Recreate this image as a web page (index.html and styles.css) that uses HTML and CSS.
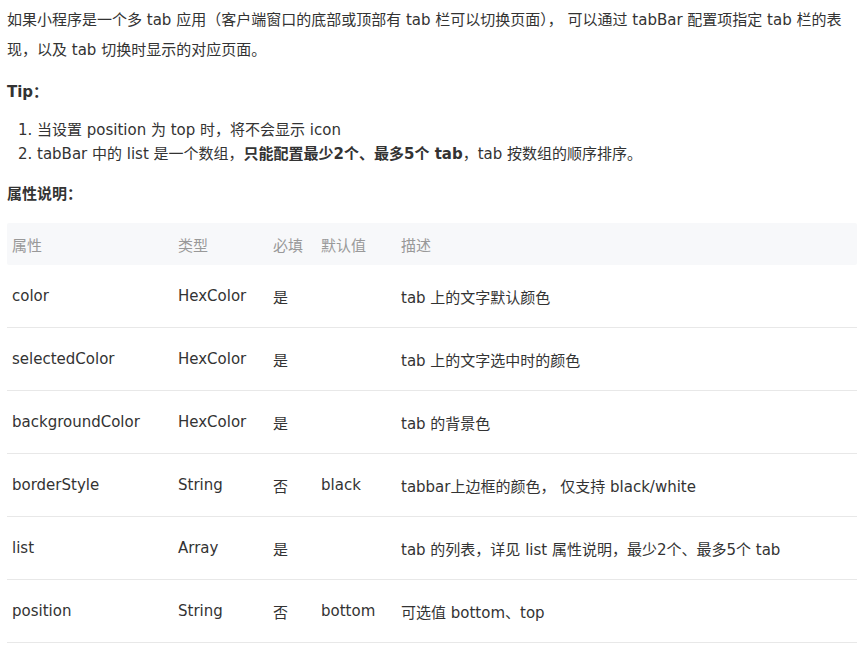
FILE: index.html
```html
<!DOCTYPE html>
<html lang="zh-CN">
<head>
<meta charset="utf-8">
<link rel="stylesheet" href="styles.css">
</head>
<body>
<div class="doc">
  <p class="intro">如果小程序是一个多 tab 应用（客户端窗口的底部或顶部有 tab 栏可以切换页面）， 可以通过 tabBar 配置项指定 tab 栏的表现，以及 tab 切换时显示的对应页面。</p>
  <p class="label">Tip：</p>
  <ol class="tips">
    <li>当设置 position 为 top 时，将不会显示 icon</li>
    <li>tabBar 中的 list 是一个数组，<strong>只能配置最少2个、最多5个 tab</strong>，tab 按数组的顺序排序。</li>
  </ol>
  <p class="label">属性说明：</p>
  <div class="table">
    <div class="row head">
      <div>属性</div><div>类型</div><div>必填</div><div>默认值</div><div>描述</div>
    </div>
    <div class="row">
      <div>color</div><div>HexColor</div><div>是</div><div></div><div>tab 上的文字默认颜色</div>
    </div>
    <div class="row">
      <div>selectedColor</div><div>HexColor</div><div>是</div><div></div><div>tab 上的文字选中时的颜色</div>
    </div>
    <div class="row">
      <div>backgroundColor</div><div>HexColor</div><div>是</div><div></div><div>tab 的背景色</div>
    </div>
    <div class="row">
      <div>borderStyle</div><div>String</div><div>否</div><div>black</div><div>tabbar上边框的颜色， 仅支持 black/white</div>
    </div>
    <div class="row">
      <div>list</div><div>Array</div><div>是</div><div></div><div>tab 的列表，详见 list 属性说明，最少2个、最多5个 tab</div>
    </div>
    <div class="row">
      <div>position</div><div>String</div><div>否</div><div>bottom</div><div>可选值 bottom、top</div>
    </div>
  </div>
</div>
</body>
</html>
```

FILE: styles.css
```css
html, body {
  margin: 0;
  padding: 0;
  background: #fff;
}
body {
  font-family: "DejaVu Sans", "Noto Sans CJK SC", sans-serif;
  font-size: 15px;
  color: #333;
}
.doc {
  width: 850px;
  padding: 5px 7px 0;
}
p {
  margin: 0;
}
.intro {
  line-height: 30px;
}
.label {
  font-weight: bold;
  line-height: 30px;
  margin-top: 12px;
}
.tips {
  margin: 11px 0 13px;
  padding-left: 30px;
  line-height: 24px;
}
.tips strong {
  font-weight: bold;
}
.table {
  margin-top: 14px;
}
.row {
  display: grid;
  grid-template-columns: 166px 95px 48px 80px 1fr;
  align-items: center;
  height: 62px;
  border-bottom: 1px solid #e8e8e8;
}
.row > div {
  padding-left: 5px;
  white-space: nowrap;
}
.row.head {
  height: 42px;
  background: #f7f8fa;
  border-bottom: none;
  color: #999;
  border-radius: 2px;
}
```
